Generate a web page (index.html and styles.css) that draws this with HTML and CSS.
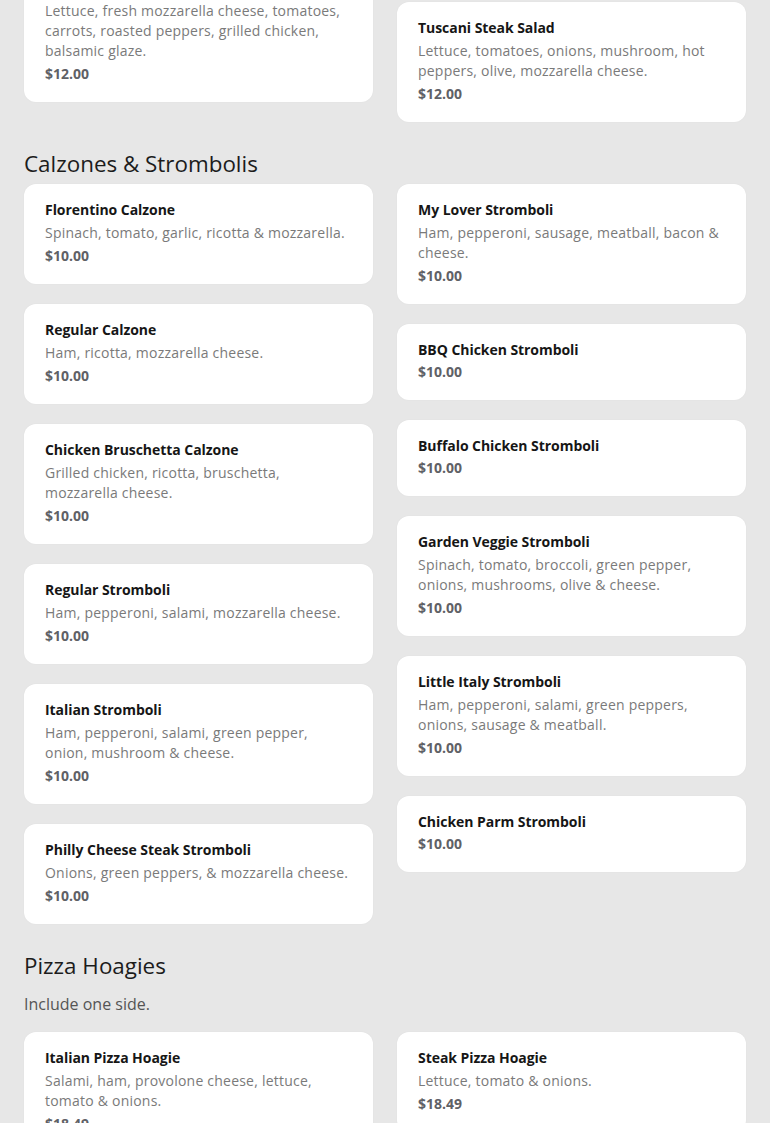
FILE: index.html
```html
<!DOCTYPE html>
<html lang="en">
<head>
<meta charset="utf-8">
<title>Menu</title>
<link rel="stylesheet" href="styles.css">
</head>
<body>
<main class="menu">
  <section class="section first">
    <div class="cols">
      <div class="col">
        <div class="card">
          <h3 class="name">Chicken Salad</h3>
          <p class="desc">Lettuce, fresh mozzarella cheese, tomatoes, carrots, roasted peppers, grilled chicken, balsamic glaze.</p>
          <p class="price">$12.00</p>
        </div>
      </div>
      <div class="col col-offset">
        <div class="card">
          <h3 class="name">Tuscani Steak Salad</h3>
          <p class="desc">Lettuce, tomatoes, onions, mushroom, hot peppers, olive, mozzarella cheese.</p>
          <p class="price">$12.00</p>
        </div>
      </div>
    </div>
  </section>

  <section class="section">
    <h2 class="heading">Calzones &amp; Strombolis</h2>
    <div class="cols">
      <div class="col">
        <div class="card">
          <h3 class="name">Florentino Calzone</h3>
          <p class="desc">Spinach, tomato, garlic, ricotta &amp; mozzarella.</p>
          <p class="price">$10.00</p>
        </div>
        <div class="card">
          <h3 class="name">Regular Calzone</h3>
          <p class="desc">Ham, ricotta, mozzarella cheese.</p>
          <p class="price">$10.00</p>
        </div>
        <div class="card">
          <h3 class="name">Chicken Bruschetta Calzone</h3>
          <p class="desc">Grilled chicken, ricotta, bruschetta, mozzarella cheese.</p>
          <p class="price">$10.00</p>
        </div>
        <div class="card">
          <h3 class="name">Regular Stromboli</h3>
          <p class="desc">Ham, pepperoni, salami, mozzarella cheese.</p>
          <p class="price">$10.00</p>
        </div>
        <div class="card">
          <h3 class="name">Italian Stromboli</h3>
          <p class="desc">Ham, pepperoni, salami, green pepper, onion, mushroom &amp; cheese.</p>
          <p class="price">$10.00</p>
        </div>
        <div class="card">
          <h3 class="name">Philly Cheese Steak Stromboli</h3>
          <p class="desc">Onions, green peppers, &amp; mozzarella cheese.</p>
          <p class="price">$10.00</p>
        </div>
      </div>
      <div class="col">
        <div class="card">
          <h3 class="name">My Lover Stromboli</h3>
          <p class="desc">Ham, pepperoni, sausage, meatball, bacon &amp; cheese.</p>
          <p class="price">$10.00</p>
        </div>
        <div class="card">
          <h3 class="name">BBQ Chicken Stromboli</h3>
          <p class="price">$10.00</p>
        </div>
        <div class="card">
          <h3 class="name">Buffalo Chicken Stromboli</h3>
          <p class="price">$10.00</p>
        </div>
        <div class="card">
          <h3 class="name">Garden Veggie Stromboli</h3>
          <p class="desc">Spinach, tomato, broccoli, green pepper, onions, mushrooms, olive &amp; cheese.</p>
          <p class="price">$10.00</p>
        </div>
        <div class="card">
          <h3 class="name">Little Italy Stromboli</h3>
          <p class="desc">Ham, pepperoni, salami, green peppers, onions, sausage &amp; meatball.</p>
          <p class="price">$10.00</p>
        </div>
        <div class="card">
          <h3 class="name">Chicken Parm Stromboli</h3>
          <p class="price">$10.00</p>
        </div>
      </div>
    </div>
  </section>

  <section class="section">
    <h2 class="heading">Pizza Hoagies</h2>
    <p class="note">Include one side.</p>
    <div class="cols">
      <div class="col">
        <div class="card">
          <h3 class="name">Italian Pizza Hoagie</h3>
          <p class="desc">Salami, ham, provolone cheese, lettuce, tomato &amp; onions.</p>
          <p class="price">$18.49</p>
        </div>
      </div>
      <div class="col">
        <div class="card">
          <h3 class="name">Steak Pizza Hoagie</h3>
          <p class="desc">Lettuce, tomato &amp; onions.</p>
          <p class="price">$18.49</p>
        </div>
      </div>
    </div>
  </section>
</main>
</body>
</html>
```

FILE: styles.css
```css
html, body {
  margin: 0;
  padding: 0;
  background: #e7e7e7;
}

body {
  font-family: "Open Sans", "Liberation Sans", sans-serif;
  color: #1a1a1a;
  overflow: hidden;
}

.menu {
  padding: 0 24px;
  margin-top: -38px;
}

.section {
  margin-bottom: 26px;
}

.heading {
  margin: 0 0 4px;
  font-size: 22.4px;
  font-weight: 400;
  line-height: 32px;
  color: #1c1c1c;
}

.note {
  margin: 10px 0 16px;
  font-size: 16px;
  line-height: 24px;
  color: #555;
}

.cols {
  display: flex;
  gap: 24px;
  align-items: flex-start;
}

.col {
  flex: 1 1 0;
  min-width: 0;
  display: flex;
  flex-direction: column;
  gap: 20px;
}

.col-offset {
  padding-top: 40px;
}

.card {
  background: #fff;
  border-radius: 12px;
  padding: 16px 21px 18px;
  box-shadow: 0 0 2px rgba(0, 0, 0, 0.04);
}

.name {
  margin: 0 0 2px;
  font-size: 14px;
  font-weight: 700;
  line-height: 20px;
  color: #161616;
  letter-spacing: -0.05px;
}

.desc {
  margin: 3px 0 3px;
  font-size: 14px;
  line-height: 20px;
  color: #7a7a7a;
  letter-spacing: 0.22px;
}

.price {
  margin: 0;
  font-size: 14px;
  font-weight: 700;
  line-height: 20px;
  color: #5f6166;
}
```
